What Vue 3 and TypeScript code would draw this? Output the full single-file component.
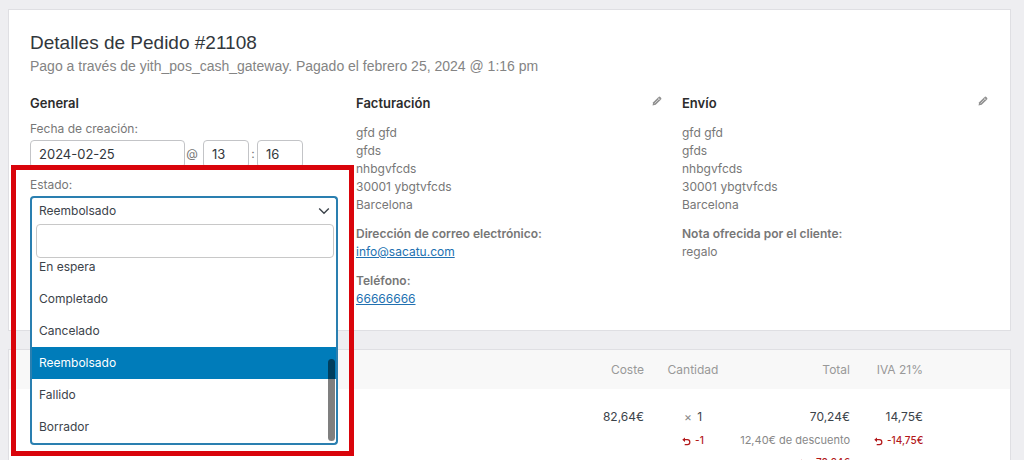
<script setup lang="ts">
import { ref } from 'vue'

const createdDate = ref('2024-02-25')
const createdHour = ref('13')
const createdMinute = ref('16')
const search = ref('')
const status = ref('Reembolsado')
const statuses: string[] = ['En espera', 'Completado', 'Cancelado', 'Reembolsado', 'Fallido', 'Borrador']
const address: string[] = ['gfd gfd', 'gfds', 'nhbgvfcds', '30001 ybgtvfcds', 'Barcelona']
</script>

<template>
  <main class="page">
    <section class="card details">
      <h1>Detalles de Pedido #21108</h1>
      <p class="subtitle">Pago a través de yith_pos_cash_gateway. Pagado el febrero 25, 2024 @ 1:16 pm</p>

      <div class="columns">
        <div class="column">
          <h2>General</h2>
          <div class="field">
            <label for="created-date">Fecha de creación:</label>
            <div class="date-row">
              <input id="created-date" v-model="createdDate" class="box date" type="text" />
              <span class="sep">@</span>
              <input v-model="createdHour" class="box time" type="text" aria-label="Hora" />
              <span class="sep colon">:</span>
              <input v-model="createdMinute" class="box time" type="text" aria-label="Minuto" />
            </div>
          </div>
          <div class="field status">
            <label for="order-status">Estado:</label>
            <div class="select-wrap">
              <select id="order-status" v-model="status">
                <option v-for="s in statuses" :key="s" :value="s">{{ s }}</option>
              </select>
              <svg class="chevron" viewBox="0 0 12 8" aria-hidden="true">
                <path d="M1.200 1.500 L6 6.300 L10.800 1.500" fill="none" stroke="#3c434a" stroke-width="1.400" />
              </svg>
              <div class="dropdown">
                <input v-model="search" class="search" type="text" aria-label="Buscar estado" />
                <ul class="options" role="listbox" aria-label="Estado">
                  <li
                    v-for="s in statuses"
                    :key="s"
                    role="option"
                    :aria-selected="s === status"
                    :class="{ selected: s === status }"
                    @click="status = s"
                  >{{ s }}</li>
                </ul>
                <span class="thumb"></span>
              </div>
            </div>
            <div class="highlight"></div>
          </div>
        </div>

        <div class="column">
          <div class="heading">
            <h2>Facturación</h2>
            <button class="edit" type="button" aria-label="Editar facturación">
              <svg viewBox="0 0 10 10" aria-hidden="true">
                <path d="M0.500 9.500 L1.200 6.300 L6.600 0.900 Q7.400 0.200 8.300 1 L9 1.700 Q9.800 2.600 9.100 3.400 L3.700 8.800 Z" fill="#909090" />
                <path d="M2.500 7.500 L7 3 M6 1.700 L8.300 4" stroke="#e6e6e6" stroke-width="0.700" />
              </svg>
            </button>
          </div>
          <p><template v-for="line in address" :key="line">{{ line }}<br /></template></p>
          <p><strong>Dirección de correo electrónico:</strong><br /><a href="mailto:info@sacatu.com">info@sacatu.com</a></p>
          <p><strong>Teléfono:</strong><br /><a href="tel:66666666">66666666</a></p>
        </div>

        <div class="column">
          <div class="heading">
            <h2>Envío</h2>
            <button class="edit" type="button" aria-label="Editar envío">
              <svg viewBox="0 0 10 10" aria-hidden="true">
                <path d="M0.500 9.500 L1.200 6.300 L6.600 0.900 Q7.400 0.200 8.300 1 L9 1.700 Q9.800 2.600 9.100 3.400 L3.700 8.800 Z" fill="#909090" />
                <path d="M2.500 7.500 L7 3 M6 1.700 L8.300 4" stroke="#e6e6e6" stroke-width="0.700" />
              </svg>
            </button>
          </div>
          <p><template v-for="line in address" :key="line">{{ line }}<br /></template></p>
          <p><strong>Nota ofrecida por el cliente:</strong><br />regalo</p>
        </div>
      </div>
    </section>

    <section class="card items">
      <table>
        <colgroup>
          <col />
          <col class="c-qty" />
          <col class="c-total" />
          <col class="c-tax" />
          <col class="c-end" />
        </colgroup>
        <thead>
          <tr>
            <th>Coste</th>
            <th class="center">Cantidad</th>
            <th>Total</th>
            <th>IVA 21%</th>
            <th></th>
          </tr>
        </thead>
        <tbody>
          <tr>
            <td>82,64€</td>
            <td class="center">
              <div><span class="times">×</span> 1</div>
              <div class="refund">
                <svg viewBox="0 0 10 10" aria-hidden="true"><path d="M0.300 3 L3.300 0.500 V5.500 Z" fill="#b3181a" /><path d="M2.500 3 H6 A2.600 2.600 0 0 1 6 8.400 H3" fill="none" stroke="#b3181a" stroke-width="1.400" /></svg>
                <span>-1</span>
              </div>
            </td>
            <td class="total">
              <div>70,24€</div>
              <div class="discount">12,40€ de descuento</div>
              <div class="refund">
                <svg viewBox="0 0 10 10" aria-hidden="true"><path d="M0.300 3 L3.300 0.500 V5.500 Z" fill="#b3181a" /><path d="M2.500 3 H6 A2.600 2.600 0 0 1 6 8.400 H3" fill="none" stroke="#b3181a" stroke-width="1.400" /></svg>
                <span>-70,24€</span>
              </div>
            </td>
            <td>
              <div>14,75€</div>
              <div class="refund">
                <svg viewBox="0 0 10 10" aria-hidden="true"><path d="M0.300 3 L3.300 0.500 V5.500 Z" fill="#b3181a" /><path d="M2.500 3 H6 A2.600 2.600 0 0 1 6 8.400 H3" fill="none" stroke="#b3181a" stroke-width="1.400" /></svg>
                <span>-14,75€</span>
              </div>
            </td>
            <td></td>
          </tr>
        </tbody>
      </table>
    </section>
  </main>
</template>

<style>
html {
  background: #eeeef1;
  overflow-x: hidden;
  scrollbar-width: none;
}
</style>

<style scoped>
* {
  box-sizing: border-box;
}
.page {
  display: flex;
  flex-direction: column;
  gap: 18px;
  padding: 9px 13px 9px 8px;
  font-family: Inter, "Liberation Sans", sans-serif;
  font-size: 12px;
  line-height: 18px;
  color: #777;
}
.card {
  background: #fff;
  border: 1px solid #dfdfe3;
}
.details {
  padding: 20px 20px 22px 21px;
}
h1,
h2,
p,
ul {
  margin: 0;
  padding: 0;
}
h1 {
  font-family: "Liberation Sans", Arial, sans-serif;
  font-size: 19px;
  font-weight: 300;
  line-height: 26px;
  color: #32373c;
}
.subtitle {
  font-family: "Liberation Sans", Arial, sans-serif;
  font-size: 14px;
  font-weight: 300;
  line-height: 20px;
  color: #848484;
}
.columns {
  display: grid;
  grid-template-columns: repeat(3, 1fr);
  gap: 18px;
  margin-top: 18px;
}
.column {
  display: flex;
  flex-direction: column;
  gap: 11px;
}
.heading {
  display: flex;
  justify-content: space-between;
}
h2 {
  padding-bottom: 1px;
  font-size: 13px;
  font-weight: 600;
  line-height: 18px;
  color: #2c2c2c;
}
.edit {
  width: 14px;
  height: 14px;
  padding: 1px 2px;
  border: 0;
  background: none;
}
.edit svg {
  display: block;
  width: 10px;
  height: 10px;
}
strong {
  font-weight: 600;
}
a {
  color: #2271b1;
}
.field {
  display: flex;
  flex-direction: column;
  gap: 2px;
  margin-top: -4px;
}
.date-row {
  display: flex;
  align-items: center;
}
.box {
  height: 28px;
  padding: 0 8px;
  border: 1px solid #c3c4c7;
  border-radius: 4px;
  background: #fff;
  font: inherit;
  font-size: 13px;
  color: #32373c;
}
.date {
  width: 155px;
}
.time {
  width: 46px;
}
.sep {
  width: 18px;
  padding-right: 4px;
  text-align: center;
}
.colon {
  width: 8px;
  padding-right: 0;
}
.status {
  position: relative;
  margin-top: -3px;
}
.select-wrap {
  position: relative;
}
select {
  display: block;
  width: 100%;
  height: 28px;
  padding: 0 7px;
  border: 2px solid #2a7fb0;
  border-bottom: 0;
  border-radius: 4px 4px 0 0;
  background: #fff;
  appearance: none;
  font: inherit;
  color: #3c434a;
}
.chevron {
  position: absolute;
  top: 11px;
  right: 8px;
  width: 12px;
  height: 8px;
}
.dropdown {
  position: absolute;
  z-index: 1;
  top: 100%;
  left: 0;
  right: 0;
  border: 2px solid #2a7fb0;
  border-top: 0;
  border-radius: 0 0 4px 4px;
  background: #fff;
}
.search {
  display: block;
  width: calc(100% - 6px);
  height: 34px;
  margin: 0 2px 0 4px;
  padding: 0 8px;
  border: 1px solid #c8c8c8;
  border-radius: 4px;
  background: #fff;
  font: inherit;
}
.options {
  display: flex;
  flex-direction: column;
  justify-content: flex-end;
  max-height: 185px;
  overflow: hidden;
  list-style: none;
}
.options li {
  flex: none;
  padding: 7px;
  color: #3c434a;
}
.options .selected {
  background: #007cba;
  color: #fff;
}
.thumb {
  position: absolute;
  right: 1px;
  bottom: 2px;
  width: 7px;
  height: 82px;
  border-radius: 4px;
  background: rgba(0, 0, 0, 0.5);
}
.highlight {
  position: absolute;
  z-index: 2;
  top: -11px;
  left: -19px;
  right: -16px;
  height: 291px;
  border: 5px solid #d9040b;
  pointer-events: none;
}
table {
  width: 100%;
  border-collapse: collapse;
  table-layout: fixed;
}
.c-qty {
  width: 74px;
}
.c-total {
  width: 132px;
}
.c-tax {
  width: 73px;
}
.c-end {
  width: 75px;
}
th {
  padding: 11px 12px 10px;
  background: #f8f8f8;
  font-weight: 400;
  text-align: right;
  color: #999;
}
td {
  padding: 16px 12px;
  line-height: 24px;
  text-align: right;
  vertical-align: top;
  color: #3c434a;
}
.center {
  padding-left: 0;
  padding-right: 0;
  text-align: center;
}
.total {
  padding-left: 0;
}
.times {
  margin-right: 2px;
  color: #888;
}
.discount {
  font-size: 11px;
  line-height: 22px;
  color: #888;
  white-space: nowrap;
}
.refund {
  font-size: 10px;
  line-height: 22px;
  font-weight: 500;
  color: #b3181a;
  white-space: nowrap;
}
.refund svg {
  width: 9px;
  height: 9px;
  margin-right: 4px;
  vertical-align: -2px;
}
</style>
